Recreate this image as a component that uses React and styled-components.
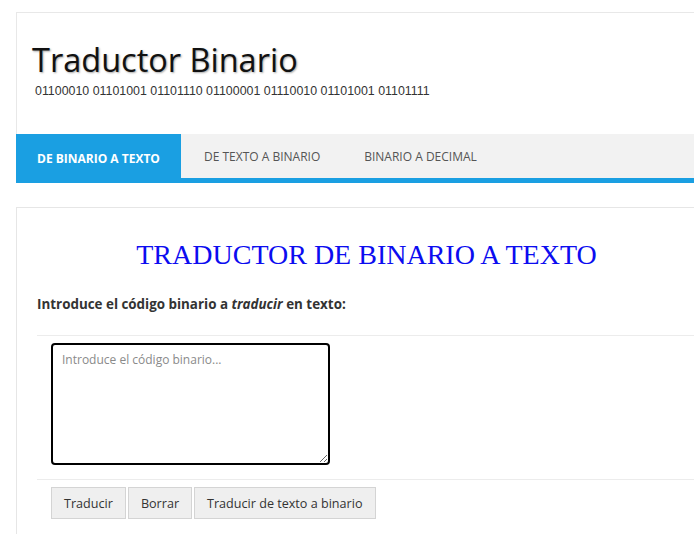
import React from "react";
import styled, { createGlobalStyle } from "styled-components";

const GlobalStyle = createGlobalStyle`
  html, body {
    margin: 0;
    padding: 0;
    background: #ffffff;
    overflow-x: hidden;
  }
  body {
    font-family: "Open Sans", "Noto Sans", sans-serif;
    color: #333333;
  }
  * {
    box-sizing: border-box;
  }
`;

const Page = styled.div`
  width: 680px;
  margin: 12px 0 0 16px;
`;

const Header = styled.header`
  height: 122px;
  border-top: 1px solid #e8e8e8;
  border-left: 1px solid #e8e8e8;
  padding: 27px 15px 0;
`;

const SiteTitle = styled.h1`
  margin: 0;
  font-size: 32.5px;
  font-weight: 400;
  line-height: 40px;
  color: #111111;
  text-shadow: 1px 1px 2px rgba(0, 0, 0, 0.35);
`;

const Tagline = styled.p`
  margin: 4px 0 0 3px;
  font-family: "Liberation Sans", Arial, sans-serif;
  font-size: 12.4px;
  line-height: 14px;
  color: #333333;
`;

const Nav = styled.nav`
  display: flex;
  height: 49px;
  background: #f2f2f2;
  border-bottom: 5px solid #1a9fe2;
`;

const Tab = styled.a`
  display: flex;
  align-items: center;
  height: ${(p) => (p.$active ? "49px" : "44px")};
  padding: ${(p) => (p.$active ? "0 21px" : "0 21px 0 23px")};
  font-size: 12px;
  font-weight: ${(p) => (p.$active ? 700 : 400)};
  text-transform: uppercase;
  color: ${(p) => (p.$active ? "#ffffff" : "#555555")};
  background: ${(p) => (p.$active ? "#1a9fe2" : "transparent")};
  text-decoration: none;
  white-space: nowrap;
`;

const Content = styled.main`
  margin-top: 24px;
  border-top: 1px solid #e6e6e6;
  border-left: 1px solid #e6e6e6;
  padding: 31px 0 0 20px;
  min-height: 330px;
`;

const Heading = styled.h2`
  margin: 0;
  font-family: "Liberation Serif", "Times New Roman", serif;
  font-size: 28px;
  font-weight: 400;
  line-height: 32px;
  color: #0c0cf0;
  text-align: center;
`;

const Label = styled.p`
  margin: 24px 0 0;
  font-size: 13.4px;
  font-weight: 700;
  line-height: 18px;
  color: #333333;

  em {
    font-style: italic;
  }
`;

const Row = styled.div`
  display: flex;
  gap: 2px;
  border-top: 1px solid #ececec;
  padding: 7px 0 0 14px;
  margin-top: ${(p) => p.$top || "0"};
`;

const TextArea = styled.textarea`
  width: 279px;
  height: 122px;
  border: 2px solid #000000;
  border-radius: 4px;
  padding: 6px 9px;
  font-family: "Open Sans", "Noto Sans", sans-serif;
  font-size: 12px;
  color: #333333;
  resize: both;
  outline: none;

  &::placeholder {
    color: #8a8a8a;
  }
`;

const Button = styled.button`
  height: 32px;
  padding: 0 12px;
  background: #efefef;
  border: 1px solid #d4d4d4;
  font-family: "Open Sans", "Noto Sans", sans-serif;
  font-size: 12.6px;
  color: #333333;
  cursor: pointer;
`;

export default function App() {
  return (
    <>
      <GlobalStyle />
      <Page>
        <Header>
          <SiteTitle>Traductor Binario</SiteTitle>
          <Tagline>
            01100010 01101001 01101110 01100001 01110010 01101001 01101111
          </Tagline>
        </Header>
        <Nav>
          <Tab $active href="#">De binario a texto</Tab>
          <Tab href="#">De texto a binario</Tab>
          <Tab href="#">Binario a decimal</Tab>
        </Nav>
        <Content>
          <Heading>TRADUCTOR DE BINARIO A TEXTO</Heading>
          <Label>
            Introduce el código binario a <em>traducir</em> en texto:
          </Label>
          <Row $top="22px">
            <TextArea placeholder="Introduce el código binario..." />
          </Row>
          <Row $top="14px">
            <Button>Traducir</Button>
            <Button>Borrar</Button>
            <Button>Traducir de texto a binario</Button>
          </Row>
        </Content>
      </Page>
    </>
  );
}
